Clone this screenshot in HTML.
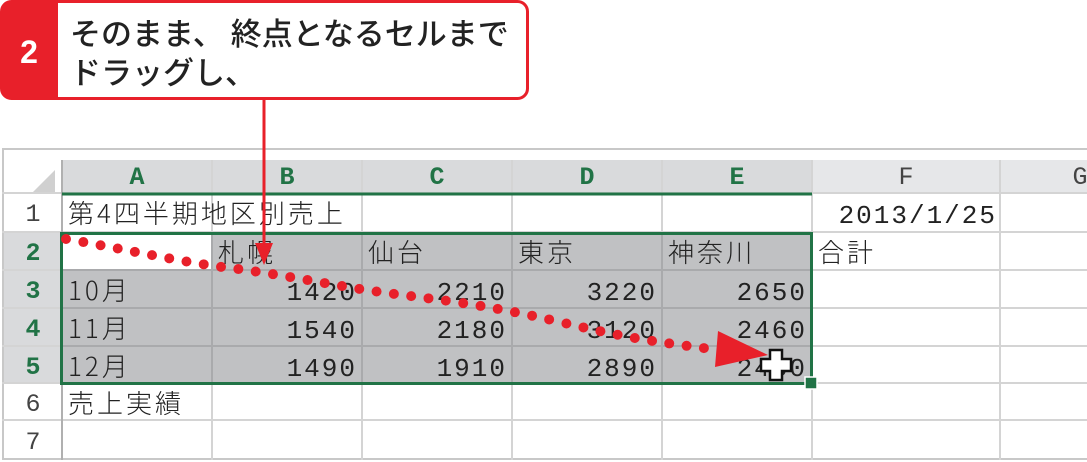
<!DOCTYPE html>
<html><head><meta charset="utf-8"><style>
body{margin:0;width:1087px;height:462px;background:#fff;position:relative;overflow:hidden;font-family:"Liberation Sans","Noto Sans CJK JP",sans-serif}
.a{position:absolute;box-sizing:border-box}
.t{position:absolute;font-family:"Noto Sans CJK JP",sans-serif;font-weight:300;font-size:26px;color:#222;line-height:1;white-space:nowrap}
.h{position:absolute;font-family:"Liberation Mono",monospace;font-weight:bold;color:#217346;font-size:25px;text-align:center}
.n{position:absolute;font-family:"Liberation Mono",monospace;font-size:26px;color:#222;text-align:right;letter-spacing:2px}
</style></head><body>
<div class="a" style="left:2px;top:148px;width:1085px;height:312px;border:2px solid #c8c8c8;border-right:none;border-bottom:2px solid #c8c8c8"></div>
<div class="a" style="left:62px;top:160px;width:1025px;height:33px;background:#e6e7e9"></div>
<div class="a" style="left:62px;top:160px;width:750px;height:33px;background:#d9dadc"></div>
<div class="a" style="left:4px;top:232px;width:58px;height:150px;background:#d9dadc"></div>
<svg class="a" style="left:0;top:0" width="1087" height="462">
<polygon points="55,170 55,192 33,192" fill="#d0d0d0"/>
<rect x="62" y="232" width="750" height="150" fill="#c0c1c3"/>
<rect x="62" y="232" width="150" height="38" fill="#fff"/>
<g stroke="#d4d4d4" stroke-width="2">
<line x1="2" y1="193" x2="1087" y2="193"/><line x1="2" y1="232" x2="1087" y2="232"/><line x1="2" y1="270" x2="1087" y2="270"/><line x1="2" y1="308" x2="1087" y2="308"/><line x1="2" y1="346" x2="1087" y2="346"/><line x1="2" y1="383" x2="1087" y2="383"/><line x1="2" y1="420" x2="1087" y2="420"/>
<line x1="212" y1="160" x2="212" y2="460"/><line x1="362" y1="160" x2="362" y2="460"/><line x1="512" y1="160" x2="512" y2="460"/><line x1="662" y1="160" x2="662" y2="460"/><line x1="812" y1="160" x2="812" y2="460"/><line x1="1000" y1="160" x2="1000" y2="460"/>
</g>
<g stroke="#a9aaac" stroke-width="2">
<line x1="62" y1="270" x2="812" y2="270"/><line x1="62" y1="308" x2="812" y2="308"/><line x1="62" y1="346" x2="812" y2="346"/>
<line x1="212" y1="232" x2="212" y2="382"/><line x1="362" y1="232" x2="362" y2="382"/><line x1="512" y1="232" x2="512" y2="382"/><line x1="662" y1="232" x2="662" y2="382"/>
</g>
<line x1="62" y1="160" x2="62" y2="460" stroke="#b0b0b0" stroke-width="2"/>
<line x1="62" y1="194" x2="812" y2="194" stroke="#217346" stroke-width="3"/>
<rect x="61.5" y="233.5" width="750" height="150" fill="none" stroke="#217346" stroke-width="3"/>
<rect x="805" y="377" width="12" height="12" fill="#217346" stroke="#fff" stroke-width="1.5"/>
</svg>
<div class="h" style="left:62px;top:163px;width:150px">A</div>
<div class="h" style="left:212px;top:163px;width:150px">B</div>
<div class="h" style="left:362px;top:163px;width:150px">C</div>
<div class="h" style="left:512px;top:163px;width:150px">D</div>
<div class="h" style="left:662px;top:163px;width:150px">E</div>
<div class="h" style="left:812px;top:163px;width:188px;color:#444;font-weight:normal">F</div>
<div class="h" style="left:1060px;top:163px;width:40px;color:#444;font-weight:normal">G</div>
<div class="h" style="left:4px;top:200px;width:58px;color:#444;font-weight:normal">1</div>
<div class="h" style="left:4px;top:239px;width:58px">2</div>
<div class="h" style="left:4px;top:277px;width:58px">3</div>
<div class="h" style="left:4px;top:315px;width:58px">4</div>
<div class="h" style="left:4px;top:353px;width:58px">5</div>
<div class="h" style="left:4px;top:390px;width:58px;color:#444;font-weight:normal">6</div>
<div class="h" style="left:4px;top:428px;width:58px;color:#444;font-weight:normal">7</div>
<div class="t" style="left:68px;top:200px;letter-spacing:3px">第4四半期地区別売上</div>
<div class="n" style="left:812px;top:201px;width:185px">2013/1/25</div>
<div class="t" style="left:218px;top:239px;letter-spacing:3px">札幌</div>
<div class="t" style="left:368px;top:239px;letter-spacing:3px">仙台</div>
<div class="t" style="left:518px;top:239px;letter-spacing:3px">東京</div>
<div class="t" style="left:668px;top:239px;letter-spacing:3px">神奈川</div>
<div class="t" style="left:818px;top:239px;letter-spacing:3px">合計</div>
<div class="t" style="left:68px;top:277px;letter-spacing:3px">10月</div>
<div class="t" style="left:68px;top:315px;letter-spacing:3px">11月</div>
<div class="t" style="left:68px;top:353px;letter-spacing:3px">12月</div>
<div class="t" style="left:68px;top:390px;letter-spacing:3px">売上実績</div>
<div class="n" style="left:212px;top:278px;width:145px">1420</div>
<div class="n" style="left:362px;top:278px;width:145px">2210</div>
<div class="n" style="left:512px;top:278px;width:145px">3220</div>
<div class="n" style="left:662px;top:278px;width:145px">2650</div>
<div class="n" style="left:212px;top:316px;width:145px">1540</div>
<div class="n" style="left:362px;top:316px;width:145px">2180</div>
<div class="n" style="left:512px;top:316px;width:145px">3120</div>
<div class="n" style="left:662px;top:316px;width:145px">2460</div>
<div class="n" style="left:212px;top:354px;width:145px">1490</div>
<div class="n" style="left:362px;top:354px;width:145px">1910</div>
<div class="n" style="left:512px;top:354px;width:145px">2890</div>
<div class="n" style="left:662px;top:354px;width:145px">2450</div>
<svg class="a" style="left:0;top:0" width="1087" height="462">
<path d="M66,239 C130,250 180,262 230,268 S330,285 380,292 S480,303 560,322 S660,342 718,350" fill="none" stroke="#e8202a" stroke-width="10" stroke-linecap="round" stroke-dasharray="0 17.5"/>
<polygon points="718,331 768,355 715,367" fill="#e8202a"/>
<path d="M770,350h12v9h9v12h-9v9h-12v-9h-9v-12h9z" fill="#fff" stroke="#111" stroke-width="2.5"/>
<line x1="264" y1="98" x2="264" y2="245" stroke="#e8202a" stroke-width="3"/>
<polygon points="255,243 273,243 264,265" fill="#e8202a"/>
<rect x="1.5" y="1.5" width="526" height="97" rx="10" fill="#fff" stroke="#e8202a" stroke-width="3"/>
<path d="M11,1.5 H58 V98.5 H11 A9.5,9.5 0 0 1 1.5,89 V11 A9.5,9.5 0 0 1 11,1.5Z" fill="#e8202a"/>
</svg>
<div class="a" style="left:0;top:34px;width:58px;text-align:center;color:#fff;font-weight:bold;font-size:32px">2</div>
<div class="a" style="left:70px;top:12px;font-family:'Noto Sans CJK JP',sans-serif;font-size:31px;line-height:39px;color:#222;font-weight:500">そのまま、 終点となるセルまで<br>ドラッグし、</div>
</body></html>
